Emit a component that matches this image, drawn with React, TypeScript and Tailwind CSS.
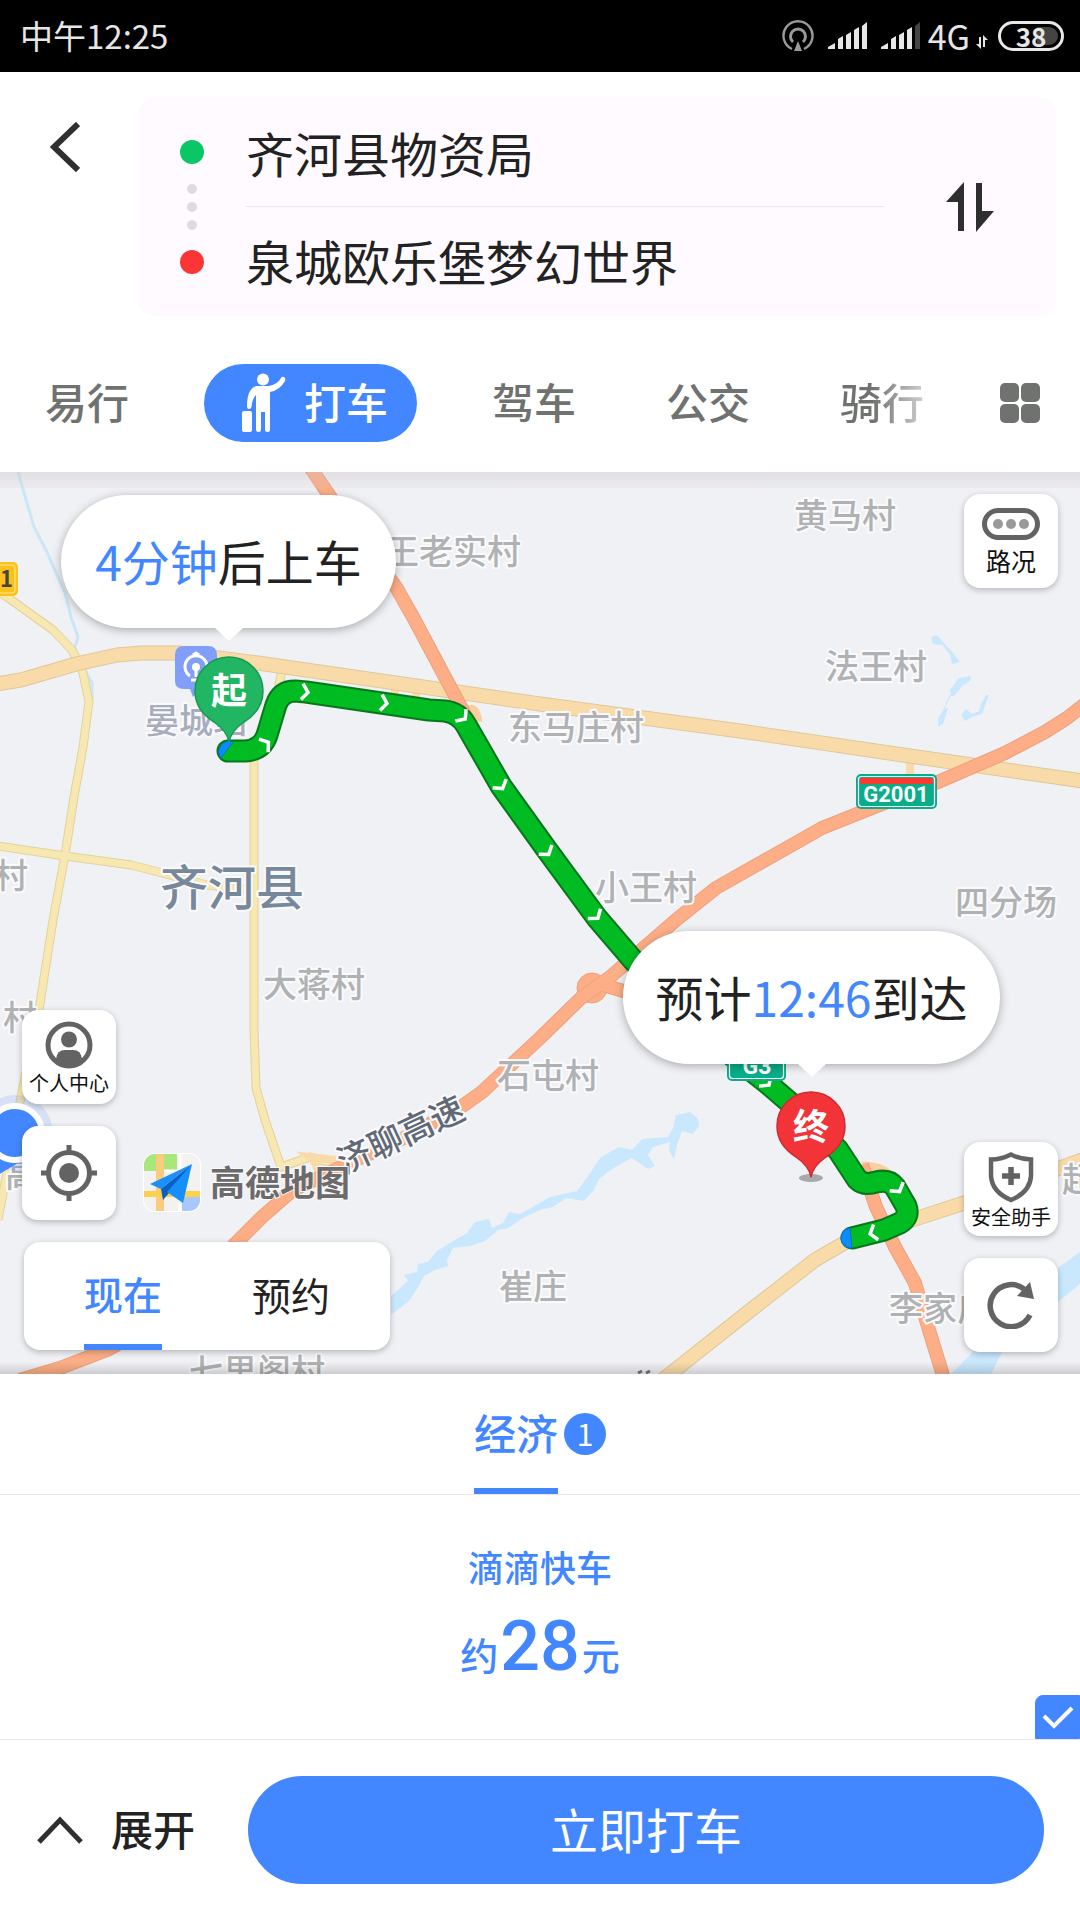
import React, { useState } from 'react';

interface ILabel {
  text: string;
  x: number;
  y: number;
}

const villages: ILabel[] = [
  { text: '王老实村', x: 453, y: 552 },
  { text: '黄马村', x: 845, y: 516 },
  { text: '法王村', x: 876, y: 667 },
  { text: '东马庄村', x: 576, y: 728 },
  { text: '小王村', x: 646, y: 888 },
  { text: '四分场', x: 1006, y: 903 },
  { text: '大蒋村', x: 314, y: 985 },
  { text: '石屯村', x: 548, y: 1076 },
  { text: '崔庄', x: 533, y: 1287 },
  { text: '七里阁村', x: 257, y: 1372 },
  { text: '李家庙', x: 940, y: 1309 },
  { text: '村', x: 11, y: 876 },
  { text: '村', x: 20, y: 1018 },
  { text: '高', x: 22, y: 1175 },
  { text: '超', x: 1079, y: 1180 },
];

// x, y, angle
const arrows = [
  [266, 744, -35],
  [305, 692, 8],
  [384, 703, 8],
  [463, 717, 42],
  [501, 786, 58],
  [547, 852, 55],
  [596, 916, 52],
  [767, 1083, 48],
  [898, 1189, 58],
  [873, 1233, 163],
];

const majorRoads = [
  'M-10 685 L21 680 L76 664 L117 655 L141 653 L179 653 L258 663 L540 704 L740 731 L910 756 L1090 782',
  'M660 1382 L747 1313 L815 1260 L846 1242 L912 1220 L964 1203 L1090 1157',
];

const minorRoads = [
  'M-8 588 L7 597 L53 630 L72 650 L83 673 L89 702 L83 747 L74 797 L65 855 L53 920 L39 1010 L21 1097 L-2 1220',
  'M-8 845 L65 856 L131 865 L162 873 L207 885 L254 890',
  'M283 665 L276 700 M254 755 L254 1030 L256 1088 L265 1120 L281 1167 L310 1157 L337 1165',
];

const highways = [
  'M308 464 L329 495 L396 587 L413 617 L461 707 L470 725',
  'M1090 700 L1067 718 L1045 732 L1005 753 L938 782 L867 810 L822 828 L716 888 L676 920 L609 978 L581 998 L540 1038 L510 1066 L482 1092 L461 1107 L406 1137 L341 1167 L293 1190 L262 1217 L234 1245 L180 1310 L107 1350 L60 1368 L20 1380',
  'M862 1165 L876 1207 L895 1247 L915 1283 L929 1330 L945 1382',
  'M600 984 L640 996',
];

const routePath =
  'M228 751 L245 751 Q262 750 267 735 L276 705 Q281 691 295 691 L306 692 L429 710 L445 711 Q459 713 466 725 L501 786 L547 850 L597 918 L633 960 L700 1030 L767 1083 L795 1107 L838 1150 L857 1179 Q864 1186 876 1182 Q889 1179 895 1187 L906 1206 Q910 1217 900 1223 L884 1230 L852 1238';

const StatusBar = () => (
  <div className="flex h-18 items-center justify-between bg-black px-5 text-[#e6e6e6]">
    <span className="text-[33px]">中午12:25</span>
    <div className="-mr-1 flex items-center">
      <svg className="h-8 w-8" viewBox="0 0 32 32" fill="none" stroke="#9a9a9a">
        <path d="M10 29 A14.5 14.5 0 1 1 22 29" strokeWidth="2.4" />
        <path d="M11 22 A7.5 7.5 0 1 1 21 22" strokeWidth="3" />
        <path d="M16 21 L20 31 H12 Z" fill="#9a9a9a" stroke="none" />
      </svg>
      <Signal />
      <Signal weak />
      <span className="ml-2 text-[34px] leading-none">4G</span>
      <svg className="mt-3 ml-[6px] h-4 w-3" viewBox="0 0 12 16" fill="#e6e6e6">
        <path d="M0 10 L3 10 L3 3 L5 3 L5 15 Z M7 1 L12 6 L9 6 L9 13 L7 13 Z" />
      </svg>
      <div className="ml-[10px] flex h-[30px] w-[66px] items-center justify-center rounded-full border-[3px] border-[#e8e8e8] bg-[linear-gradient(90deg,transparent_60%,#444_60%)] bg-clip-content p-[3px]">
        <span className="text-[26px] leading-none font-bold">38</span>
      </div>
    </div>
  </div>
);

const Signal = ({ weak }: { weak?: boolean }) => (
  <svg className="ml-[14px] h-7 w-[39px]" viewBox="0 0 39 28" fill="#e6e6e6">
    <path d="M0 27 V25 L7 21 V27 Z M10 27 V17 L15 14 V27 Z M18 27 V13 L23 10 V27 Z M26 27 V8 L31 5 V27 Z" />
    <path d="M34 27 V4 L39 0 V27 Z" fill={weak ? '#444' : '#e6e6e6'} />
  </svg>
);

const Header = () => (
  <header className="flex items-start pt-[26px] pr-6">
    <button aria-label="返回" className="flex w-[138px] justify-center pt-6 pr-2">
      <svg className="h-[50px] w-[30px]" viewBox="0 0 30 50" fill="none" stroke="#2f2f2f" strokeWidth="6">
        <path d="M28 2 L4 25 L28 48" />
      </svg>
    </button>
    <div className="flex h-[218px] flex-1 items-center rounded-2xl bg-[#fefaff]">
      <div className="flex w-[108px] flex-col items-center gap-2">
        <i className="mb-3 size-6 rounded-full bg-[#09c765]" />
        <i className="size-[10px] rounded-full bg-[#dfdbe1]" />
        <i className="size-[10px] rounded-full bg-[#dfdbe1]" />
        <i className="size-[10px] rounded-full bg-[#dfdbe1]" />
        <i className="mt-3 size-6 rounded-full bg-[#fb3434]" />
      </div>
      <div className="flex flex-1 flex-col">
        <input aria-label="起点" defaultValue="齐河县物资局" className="h-[109px] w-full border-b border-[#ebe7ec] bg-transparent text-[48px] text-[#222] outline-none" />
        <input aria-label="终点" defaultValue="泉城欧乐堡梦幻世界" className="h-[109px] w-full bg-transparent pb-1 text-[48px] text-[#222] outline-none" />
      </div>
      <button aria-label="交换起终点" className="flex w-[172px] justify-center">
        <svg className="h-[50px] w-12" viewBox="0 0 48 50" fill="#2e2e2e">
          <path d="M18 0 V49 H12 V20 H0 Z M30 1 H36 V29 H48 L30 50 Z" />
        </svg>
      </button>
    </div>
  </header>
);

const Tabs = () => (
  <nav className="flex items-center pt-12 pb-[30px] text-[42px] leading-none font-medium text-[#707270]">
    <button className="px-[45px] pb-1">易行</button>
    <button className="mx-[30px] flex h-[78px] items-center rounded-full bg-[#4287ff] pr-[29px] pl-[38px] text-white">
      <svg className="mr-[17px] h-[60px] w-[45px]" viewBox="0 0 45 60" fill="white">
        <circle cx="21" cy="6.500" r="6" />
        <path d="M14 13 H27 Q36 11 39 5 Q40 3 42 4 Q44 5 43 8 Q38 17 28 19 V57 Q28 59 25.500 59 Q23 59 23 57 V39 H19 V57 Q19 59 16.500 59 Q14 59 14 57 V22 Q10 26 9.500 34 Q9 36 7 36 Q5 36 5 33 Q5 16 14 13 Z" />
        <rect x="0" y="38" width="10" height="21" rx="2" />
      </svg>
      <span className="pb-1">打车</span>
    </button>
    <button className="px-[45px] pb-1">驾车</button>
    <button className="px-[45px] pb-1">公交</button>
    <button className="bg-linear-to-r from-[#707270] from-60% to-[#d0d0d0] to-100% bg-clip-text pb-1 pl-[45px] text-transparent">骑行</button>
    <button aria-label="更多" className="mr-10 ml-auto grid grid-cols-2 gap-[2px]">
      <i className="size-[19px] rounded-[5px] bg-[#707270]" />
      <i className="size-[19px] rounded-[5px] bg-[#707270]" />
      <i className="size-[19px] rounded-[5px] bg-[#707270]" />
      <i className="size-[19px] rounded-[5px] bg-[#707270]" />
    </button>
  </nav>
);

const MapCanvas = () => (
  <svg className="absolute inset-0 h-full w-full" viewBox="0 472 1080 902" preserveAspectRatio="xMidYMid slice" fill="none">
    <rect x="0" y="472" width="1080" height="902" fill="#f0f1f5" />
    {/* water */}
    <path d="M18 472 L34 527 L46 550 L65 593 L71 617 L78 637 L74 650 L92 683 L92 700" stroke="#cbe6f7" strokeWidth="3" />
    <path
      fill="#c9e8fd"
      d="M931 637 L937 635 L943 642 L952 652 L960 662 L952 664 L950 655 L943 645 L933 644 Z M959 678 L971 676 L970 681 L962 686 L955 695 L951 697 L950 690 Z M944 709 L948 708 L943 724 L938 727 L938 718 Z M986 695 L989 695 L982 714 L972 717 L965 721 L961 715 L966 709 L972 714 L979 711 L981 704 Z"
    />
    <path d="M950 695 L944 709" stroke="#c9e8fd" />
    <path
      fill="#c9e8fd"
      d="M690 1112 L698 1119 L699 1126 L693 1134 L682 1131 L677 1145 L674 1160 L669 1150 L670 1142 L653 1147 L648 1155 L655 1166 L648 1169 L632 1158 L612 1169 L599 1179 L594 1190 L584 1201 L566 1198 L553 1207 L540 1210 L523 1218 L508 1228 L498 1230 L485 1241 L470 1246 L453 1248 L447 1260 L448 1266 L435 1270 L424 1276 L417 1289 L409 1301 L391 1315 L391 1296 L408 1281 L404 1275 L417 1272 L418 1264 L428 1262 L437 1251 L455 1240 L467 1233 L475 1222 L489 1219 L492 1228 L503 1223 L509 1212 L520 1214 L550 1197 L577 1191 L590 1173 L601 1157 L619 1147 L632 1150 L642 1139 L668 1137 L673 1128 L676 1115 Z"
    />
    <path fill="#c9e8fd" d="M1080 1252 L1058 1268 V1302 L1080 1284 Z M975 1350 L1003 1350 L991 1374 L951 1374 Z" />
    {/* roads */}
    {minorRoads.map((d) => (
      <path key={d} d={d} stroke="#e2d29b" strokeWidth="9" strokeLinejoin="round" />
    ))}
    {minorRoads.map((d) => (
      <path key={d} d={d} stroke="#f7e7b0" strokeWidth="7" strokeLinejoin="round" />
    ))}
    <path d="M337 1160 L310 1157 Q318 1163 318 1175 M395 682 V697 M416 685 V700 M910 757 V776" stroke="#f9dba9" strokeWidth="8" />
    <path d="M462 716 Q475 700 478 722 M862 1166 Q880 1166 890 1175" stroke="#f9cfa0" strokeWidth="9" />
    {majorRoads.map((d) => (
      <path key={d} d={d} stroke="#dfc899" strokeWidth="15" strokeLinejoin="round" />
    ))}
    {majorRoads.map((d) => (
      <path key={d} d={d} stroke="#f9dba9" strokeWidth="13" strokeLinejoin="round" />
    ))}
    <circle cx="592" cy="988" r="15" fill="#fdae87" stroke="#eda17d" />
    {highways.map((d) => (
      <path key={d} d={d} stroke="#eda17d" strokeWidth="14" strokeLinejoin="round" />
    ))}
    {highways.map((d) => (
      <path key={d} d={d} stroke="#fdae87" strokeWidth="12" strokeLinejoin="round" />
    ))}
    <path d="M638 1373 l4 -2 M646 1373 l4 -2" stroke="#777" strokeWidth="3" />

    {/* place names */}
    <g textAnchor="middle" fill="#afb1b2" stroke="#fafafc" strokeWidth="4" strokeLinejoin="round" paintOrder="stroke" fontSize="34" fontWeight="500">
      {villages.map(({ text, x, y }) => (
        <text key={`${text}${y}`} x={x} y={y + 12}>
          {text}
        </text>
      ))}
      <text x="196" y="733" fill="#a8adbe">
        晏城站
      </text>
      <text x="232" y="905" fill="#77889b" fontSize="48">
        齐河县
      </text>
      <text transform="translate(406 1146) rotate(-25)" fill="#616976">
        济聊高速
      </text>
    </g>

    {/* road shields */}
    <rect x="-14" y="562" width="32" height="34" rx="5" fill="#fbc21c" />
    <rect x="-12" y="565" width="27" height="28" rx="3" stroke="#ffe9a0" strokeWidth="1" />
    <text x="0" y="587" fill="#444" fontSize="22" fontWeight="700">
      1
    </text>
    <rect x="856" y="774" width="81" height="35" rx="5" fill="#09ad89" />
    <rect x="858.500" y="776.500" width="76" height="30" rx="3" stroke="#fff" strokeWidth="1.200" />
    <rect x="860" y="778" width="73" height="6" fill="#fb3a30" />
    <text x="896" y="802" fill="#fff" fontSize="22" fontWeight="700" textAnchor="middle" fontFamily="Roboto, sans-serif">
      G2001
    </text>

    {/* route */}
    <path d={routePath} stroke="#08761b" strokeWidth="23" strokeLinecap="round" strokeLinejoin="round" />
    <path d={routePath} stroke="#00bb22" strokeWidth="19" strokeLinecap="round" strokeLinejoin="round" />
    <path d="M233 742 A10.5 10.5 0 0 0 221 758 Z M850 1228 A10 10 0 0 0 852 1248 Z" fill="#0a8cff" stroke="#0a6fd0" />
    {arrows.map(([x, y, angle]) => (
      <path key={`${x}-${y}`} d="M-3 -8 L3 0 L-3 8" transform={`translate(${x} ${y}) rotate(${angle})`} stroke="#fff" strokeWidth="3.500" />
    ))}
    <rect x="727" y="1046" width="59" height="35" rx="5" fill="#09ad89" />
    <rect x="729.500" y="1048.500" width="54" height="30" rx="3" stroke="#fff" strokeWidth="1.200" />
    <text x="757" y="1074" fill="#fff" fontSize="23" fontWeight="700" textAnchor="middle" fontFamily="Roboto, sans-serif">
      G3
    </text>

    {/* station */}
    <path d="M184 646 H208 Q217 646 217 655 V681 Q217 689 208 689 H200 L193 697 L190 689 H184 Q175 689 175 681 V655 Q175 646 184 646 Z" fill="#809efa" />
    <path d="M190 676 A11 11 0 1 1 202 676 M193 655 L196 653 L199 655 M196 668 V677 M191 680 H201" stroke="#fff" strokeWidth="3" />
    <circle cx="196" cy="667" r="4" fill="#fff" />

    {/* pins */}
    <path d="M229 742 Q227 731 214 722 Q195 710 195 691 A34 34 0 0 1 263 691 Q263 710 244 722 Q231 731 229 742 Z" fill="#22b563" stroke="#159a50" strokeWidth="1.500" />
    <text x="229" y="704" fill="#fff" fontSize="36" fontWeight="700" textAnchor="middle">
      起
    </text>
    <ellipse cx="811" cy="1178" rx="12" ry="4" fill="#a9a9ab" />
    <path d="M811 1177 Q809 1166 796 1157 Q777 1145 777 1126 A34 34 0 0 1 845 1126 Q845 1145 826 1157 Q813 1166 811 1177 Z" fill="#f23338" stroke="#cf2a30" strokeWidth="1.500" />
    <text x="811" y="1140" fill="#fff" fontSize="36" fontWeight="700" textAnchor="middle">
      终
    </text>

    {/* current position */}
    <circle cx="15" cy="1133" r="38" fill="#4287ff" opacity=".15" />
    <path d="M-8 1150 L30 1156 L-4 1176 Z" fill="#4287ff" />
    <circle cx="15" cy="1133" r="27" fill="#4287ff" stroke="#fff" strokeWidth="6" />

    {/* amap logo */}
    <clipPath id="logo">
      <rect x="144" y="1154" width="56" height="57" rx="11" />
    </clipPath>
    <rect x="143" y="1153" width="58" height="59" rx="12" fill="#fff" />
    <g clipPath="url(#logo)">
      <rect x="144" y="1154" width="56" height="57" fill="#f4f2f0" />
      <path d="M144 1154 H177 V1171 H144 Z" fill="#a9e77c" />
      <path d="M182 1197 H200 V1211 H182 Z" fill="#a8c8fb" />
      <path d="M156 1154 H164 V1211 H156 Z" fill="#fccb7c" />
      <path d="M144 1191 H200 V1197 H144 Z" fill="#fdd14c" />
      <path d="M164 1171 H180 M180 1154 V1211" stroke="#fff" strokeWidth="3" />
      <path d="M192 1164 L150 1184 L161 1189 Z" fill="#1a90fb" />
      <path d="M192 1164 L161 1189 L163 1200 L169 1193 Z" fill="#0b5fc0" />
      <path d="M192 1164 L167 1192 L183 1203 Z" fill="#1590fb" />
    </g>
    <text x="280" y="1196" fill="#6c6a6a" stroke="#fafafc" strokeWidth="2" paintOrder="stroke" fontSize="35" fontWeight="700" textAnchor="middle">
      高德地图
    </text>
  </svg>
);

const Bubble = ({ className, children }: { className: string; children: React.ReactNode }) => (
  <div className={`absolute flex h-[133px] items-center justify-center rounded-full bg-white text-[48px] whitespace-nowrap text-[#222] shadow-[0_2px_10px_rgba(0,0,0,0.3)] ${className}`}>
    <p className="pb-1">{children}</p>
    <svg className="absolute top-full h-[13px] w-7" viewBox="0 0 28 13" fill="white">
      <path d="M0 0 H28 L14 13 Z" />
    </svg>
  </div>
);

const MapButton = ({ label, text, children }: { label: string; text?: string; children: React.ReactNode }) => (
  <button
    aria-label={label}
    className="flex size-[94px] flex-col items-center justify-center gap-1 rounded-2xl bg-white leading-none whitespace-nowrap text-[#111] shadow-[0_2px_6px_rgba(0,0,0,0.25)]"
  >
    {children}
    {text && <span className={text.length > 2 ? 'text-[20px]' : 'mt-1 pb-[2px] text-[25px]'}>{text}</span>}
  </button>
);

const MapSection = () => {
  const [now, setNow] = useState<boolean>(true);
  return (
    <section className="relative min-h-[902px] flex-1 overflow-hidden">
      <MapCanvas />
      <div className="absolute inset-x-0 top-0 h-4 bg-linear-to-b from-[#c8bec0]/35 to-[#c8bec0]/10" />
      <div className="absolute inset-x-0 bottom-0 h-3 bg-linear-to-b from-transparent to-black/15" />
      <Bubble className="top-[23px] left-[61px] w-[335px]">
        <span className="text-[#4287ff]">4分钟</span>后上车
      </Bubble>
      <Bubble className="top-[459px] left-[623px] w-[377px]">
        预计<span className="text-[#4287ff]">12:46</span>到达
      </Bubble>

      <div className="absolute top-[22px] right-[22px]">
        <MapButton label="路况" text="路况">
          <svg className="h-8 w-[58px]" viewBox="0 0 58 32">
            <rect x="2.500" y="2.500" width="53" height="27" rx="13.500" fill="none" stroke="#636363" strokeWidth="5" />
            <g fill="#9a9a9a">
              <circle cx="16" cy="16" r="5" />
              <circle cx="29" cy="16" r="5" />
              <circle cx="42" cy="16" r="5" />
            </g>
          </svg>
        </MapButton>
      </div>
      <div className="absolute right-[22px] bottom-[22px] flex flex-col gap-[22px]">
        <MapButton label="安全助手" text="安全助手">
          <svg className="h-[52px] w-[46px]" viewBox="0 0 46 52" fill="none" stroke="#636363">
            <path d="M23 3.500 Q13 8.500 3 8.500 V25 Q4 41 23 49 Q42 41 43 25 V8.500 Q33 8.500 23 3.500 Z" strokeWidth="4.500" />
            <path d="M23 16 V34 M14 25 H32" strokeWidth="5.500" />
          </svg>
        </MapButton>
        <MapButton label="刷新">
          <svg className="h-12 w-12" viewBox="0 0 48 48">
            <path d="M37 8 A21 21 0 1 0 43 34" fill="none" stroke="#636363" strokeWidth="5.500" />
            <path d="M43 1 L47 18 L30 15 Z" fill="#636363" />
          </svg>
        </MapButton>
      </div>
      <div className="absolute bottom-6 left-6 flex flex-col gap-[22px]">
        <div className="-ml-[2px] flex flex-col gap-[22px]">
          <MapButton label="个人中心" text="个人中心">
            <svg className="h-12 w-12" viewBox="0 0 48 48" fill="#636363">
              <circle cx="24" cy="24" r="21" fill="none" stroke="#636363" strokeWidth="5" />
              <circle cx="24" cy="18.500" r="8" />
              <path d="M11 38 Q12 29 20 29 H28 Q36 29 37 38 Q31 45 24 45 Q17 45 11 38 Z" />
            </svg>
          </MapButton>
          <MapButton label="定位">
            <svg className="h-14 w-14" viewBox="0 0 56 56" fill="none" stroke="#636363" strokeWidth="5">
              <circle cx="28" cy="28" r="20.500" />
              <path d="M28 0 V9 M28 47 V56 M0 28 H9 M47 28 H56" />
              <circle cx="28" cy="28" r="10" fill="#636363" stroke="none" />
            </svg>
          </MapButton>
        </div>
        <div className="flex h-[108px] w-[366px] gap-[90px] rounded-2xl bg-white pl-[60px] text-[39px] text-[#222] shadow-[0_2px_6px_rgba(0,0,0,0.25)]">
          <button onClick={() => setNow(true)} className={now ? 'border-b-6 border-[#4287ff] font-medium text-[#4287ff]' : 'pb-1'}>
            现在
          </button>
          <button onClick={() => setNow(false)} className={now ? 'pb-1' : 'border-b-6 border-[#4287ff] font-medium text-[#4287ff]'}>
            预约
          </button>
        </div>
      </div>
    </section>
  );
};

const OrderPanel = () => {
  const [checked, setChecked] = useState<boolean>(true);
  return (
    <footer className="bg-white text-[#4287ff]">
      <div className="flex h-[121px] items-stretch justify-center border-b border-[#e8e8e8]">
        <button className="border-b-6 border-[#4287ff] text-[42px] font-medium">经济</button>
        <span className="mt-[39px] ml-[6px] flex size-[42px] items-center justify-center rounded-full bg-[#4287ff] pb-[2px] text-[30px] leading-none text-white">1</span>
      </div>
      <label className="relative flex h-[245px] flex-col items-center border-b border-[#e8e8e8] pt-[47px] font-medium">
        <span className="text-[36px] leading-12">滴滴快车</span>
        <span className="mt-3 flex items-baseline text-[38px] leading-[88px]">
          约<b className="px-[2px] font-[Roboto,sans-serif] text-[70px] leading-[88px] font-medium">28</b>元
        </span>
        <input
          type="checkbox"
          checked={checked}
          onChange={(e) => setChecked(e.target.checked)}
          className="absolute right-0 bottom-0 h-11 w-[45px] appearance-none rounded-tl-lg border border-[#4287ff] checked:bg-[#4287ff]"
        />
        <svg className="pointer-events-none absolute right-[6px] bottom-[9px] h-[25px] w-8" viewBox="0 0 32 25" fill="none" stroke="white" strokeWidth="4">
          <path d="M2 11 L12 21 L30 3" />
        </svg>
      </label>
      <div className="flex items-center py-9 pr-9 pl-[37px]">
        <button className="flex w-[211px] items-center gap-7 text-[42px] leading-none font-medium text-[#222]">
          <svg className="h-7 w-[46px]" viewBox="0 0 46 28" fill="none" stroke="#2f2f2f" strokeWidth="5">
            <path d="M2 26 L23 4 L44 26" />
          </svg>
          <span className="pb-1">展开</span>
        </button>
        <button className="h-[108px] flex-1 rounded-full bg-[#4287ff] pb-1 text-[48px] text-white">立即打车</button>
      </div>
    </footer>
  );
};

const App = () => (
  <main lang="zh-CN" className="flex min-h-screen flex-col bg-white font-['Noto_Sans_CJK_SC',sans-serif]">
    <StatusBar />
    <Header />
    <Tabs />
    <MapSection />
    <OrderPanel />
  </main>
);

export default App;
